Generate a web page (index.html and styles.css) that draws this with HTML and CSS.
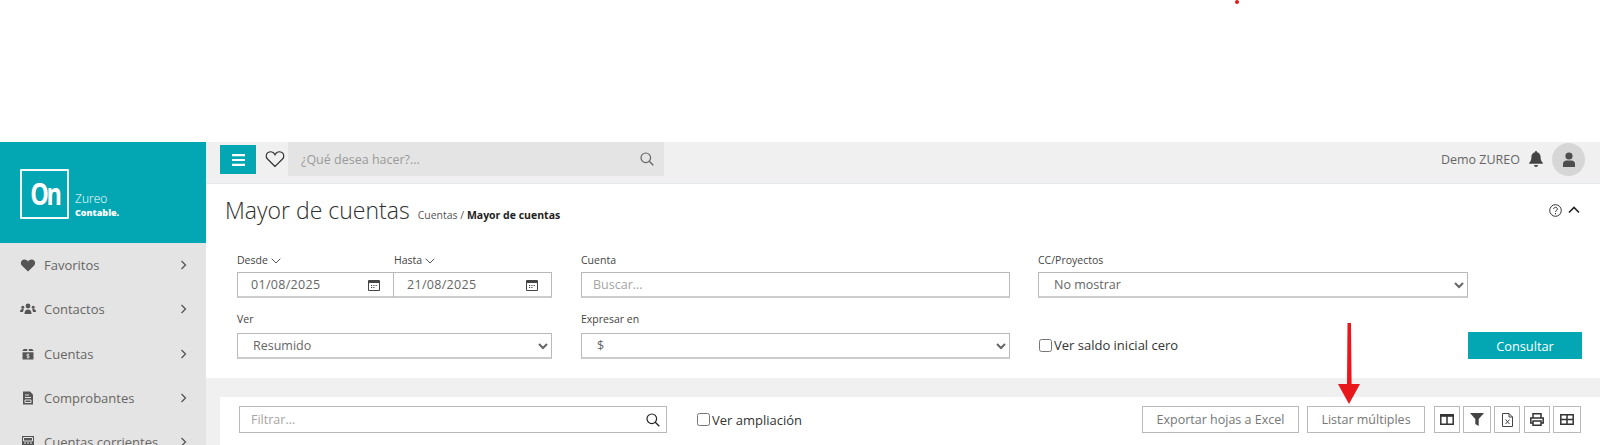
FILE: index.html
```html
<!DOCTYPE html>
<html lang="es">
<head>
<meta charset="utf-8">
<title>Mayor de cuentas</title>
<link rel="stylesheet" href="styles.css">
</head>
<body>
<span class="red-dot"></span>
<svg class="red-arrow" width="24" height="82" viewBox="0 0 24 82"><path d="M10.500 0h3.500l.6 61H23L12 81 1 61h9z" fill="#e8171b"/></svg>
<div class="app">
  <aside class="sidebar">
    <div class="brand">
      <div class="logo-box"><span class="logo-on">On</span></div>
      <div class="logo-text"><span class="logo-zureo">Zureo</span><span class="logo-cont">Contable.</span></div>
    </div>
    <nav class="menu">
      <a class="menu-item"><svg class="mi" viewBox="0 0 16 16"><path d="M8 14.500 1.800 8.400C.2 6.600.7 3.400 3.300 2.700 5 2.200 6.900 2.900 8 4.500c1.100-1.600 3-2.300 4.700-1.800 2.600.7 3.100 3.900 1.500 5.700z" fill="#555"/></svg><span class="mt">Favoritos</span><svg class="chev" viewBox="0 0 8 12"><path d="m1.500 2 4 4-4 4" fill="none" stroke="#555" stroke-width="1.300"/></svg></a>
      <a class="menu-item"><svg class="mi" viewBox="0 0 16 16"><g fill="#555"><circle cx="8" cy="5" r="2.400"/><circle cx="2.800" cy="6.200" r="1.500"/><circle cx="13.200" cy="6.200" r="1.500"/><path d="M4.500 13c0-3 1-4.600 3.500-4.600s3.500 1.600 3.500 4.600zM0 11c0-2 .8-3 2.500-3 .6 0 1 .1 1.400.4C3.300 9.200 3 10 3 11zM16 11c0-2-.8-3-2.500-3-.6 0-1 .1-1.400.4.600.8.900 1.600.900 2.600z"/></g></svg><span class="mt">Contactos</span><svg class="chev" viewBox="0 0 8 12"><path d="m1.500 2 4 4-4 4" fill="none" stroke="#555" stroke-width="1.300"/></svg></a>
      <a class="menu-item"><svg class="mi" viewBox="0 0 16 16"><path d="M2.500 5h4.700V3H5.500C3.800 3 2.500 3.500 2.500 5zM8.800 3v2h4.700c0-1.500-1.300-2-3-2zM2.500 6.200h11v7.300h-11z" fill="#555"/><path d="M8 7.500v4.700M9.300 8.500H7.500a.8.8 0 0 0 0 1.700h1a.8.8 0 0 1 0 1.600H6.700" stroke="#e4e4e4" stroke-width=".8" fill="none"/></svg><span class="mt">Cuentas</span><svg class="chev" viewBox="0 0 8 12"><path d="m1.500 2 4 4-4 4" fill="none" stroke="#555" stroke-width="1.300"/></svg></a>
      <a class="menu-item"><svg class="mi" viewBox="0 0 16 16"><path d="M3 1.500h7l3 3v10H3z" fill="#555"/><path d="M5 5h4M5 7.500h6M5 10h6v2.500H5z" stroke="#e4e4e4" fill="none"/></svg><span class="mt">Comprobantes</span><svg class="chev" viewBox="0 0 8 12"><path d="m1.500 2 4 4-4 4" fill="none" stroke="#555" stroke-width="1.300"/></svg></a>
      <a class="menu-item"><svg class="mi" viewBox="0 0 16 16"><path d="M2 2h12v12H2z" fill="#555"/><path d="M3.500 3.500h9v3.500h-9zM4 9h2M7 9h2M10 9h2M4 11.500h8" stroke="#e4e4e4" fill="none"/></svg><span class="mt">Cuentas corrientes</span><svg class="chev" viewBox="0 0 8 12"><path d="m1.500 2 4 4-4 4" fill="none" stroke="#555" stroke-width="1.300"/></svg></a>
    </nav>
  </aside>
  <main class="main">
    <header class="topbar">
      <button class="burger" type="button" aria-label="Menú"><svg width="13" height="12" viewBox="0 0 13 12"><path d="M0 1.200h13M0 6h13M0 10.800h13" stroke="#fff" stroke-width="2.200"/></svg></button>
      <svg class="fav" width="20" height="18" viewBox="0 0 20 18"><path d="M10 16.500 2.500 9C.4 6.800 1 3.400 3.500 2.300 5.600 1.400 8.600 2 10 4.700c1.400-2.700 4.400-3.300 6.500-2.400C19 3.400 19.600 6.800 17.500 9z" fill="none" stroke="#333" stroke-width="1.200"/></svg>
      <div class="top-search"><span class="top-ph">¿Qué desea hacer?...</span><svg width="14" height="14" viewBox="0 0 14 14"><circle cx="5.800" cy="5.800" r="4.800" fill="none" stroke="#666" stroke-width="1.200"/><path d="m9.300 9.300 4 4" stroke="#666" stroke-width="1.300"/></svg></div>
      <div class="top-user">
        <span class="user-name">Demo ZUREO</span>
        <svg width="14" height="16" viewBox="0 0 14 16"><path d="M7 0a1 1 0 0 1 1 1.200c2.300.5 3.600 2.300 3.600 4.800 0 3 .8 4.300 2.200 5.800v1H.2v-1C1.600 10.300 2.400 9 2.400 6c0-2.500 1.300-4.300 3.600-4.800A1 1 0 0 1 7 0zM5 14h4a2 2 0 0 1-4 0z" fill="#444"/></svg>
        <span class="avatar"><svg width="14" height="15" viewBox="0 0 14 15"><circle cx="7" cy="4" r="3.600" fill="#4d4d4d"/><path d="M1 15v-3c0-2.200 1.500-3.600 3.500-3.600h5c2 0 3.500 1.400 3.500 3.600v3z" fill="#4d4d4d"/></svg></span>
      </div>
    </header>
    <section class="head">
      <div class="title-row">
        <h1 class="title">Mayor de cuentas</h1>
        <span class="crumbs">Cuentas / <b>Mayor de cuentas</b></span>
        <span class="head-tools">
          <svg width="13" height="13" viewBox="0 0 13 13"><circle cx="6.500" cy="6.500" r="5.800" fill="none" stroke="#333" stroke-width="1"/><path d="M4.700 5c0-2.300 3.700-2.300 3.700 0 0 1.400-1.900 1.300-1.900 2.900" fill="none" stroke="#333"/><path d="M6 9h1v1.200H6z" fill="#333"/></svg>
          <svg width="12" height="8" viewBox="0 0 12 8"><path d="m1 6.500 5-5 5 5" fill="none" stroke="#222" stroke-width="1.600"/></svg>
        </span>
      </div>
      <div class="f-row f-row-first">
        <div class="f-col c1 date-pair">
          <div class="date-field">
            <span class="lbl">Desde <svg width="10" height="6" viewBox="0 0 10 6"><path d="m.7.7 4.300 4.300L9.300.7" fill="none" stroke="#555"/></svg></span>
            <div class="box date-box"><span class="val">01/08/2025</span><svg class="cal" width="12" height="12" viewBox="0 0 12 12"><path d="M.5 1.500h11v10H.5z" fill="none" stroke="#444"/><path d="M.5 2h11v2H.5zM3 6h1.200v1H3zM5.300 6h1.200v1H5.300zM7.600 6h1.200v1H7.600zM3 8h1.200v1H3zM5.300 8h1.200v1H5.300z" fill="#444"/></svg></div>
          </div>
          <div class="date-field">
            <span class="lbl">Hasta <svg width="10" height="6" viewBox="0 0 10 6"><path d="m.7.7 4.300 4.300L9.300.7" fill="none" stroke="#555"/></svg></span>
            <div class="box date-box date-box-r"><span class="val">21/08/2025</span><svg class="cal" width="12" height="12" viewBox="0 0 12 12"><path d="M.5 1.500h11v10H.5z" fill="none" stroke="#444"/><path d="M.5 2h11v2H.5zM3 6h1.200v1H3zM5.300 6h1.200v1H5.300zM7.600 6h1.200v1H7.600zM3 8h1.200v1H3zM5.300 8h1.200v1H5.300z" fill="#444"/></svg></div>
          </div>
        </div>
        <div class="f-col c2"><span class="lbl">Cuenta</span><input class="box inp" placeholder="Buscar..."></div>
        <div class="f-col c3"><span class="lbl">CC/Proyectos</span><select class="box sel"><option>No mostrar</option></select></div>
      </div>
      <div class="f-row f-row-second">
        <div class="f-col c1"><span class="lbl">Ver</span><select class="box sel"><option>Resumido</option></select></div>
        <div class="f-col c2"><span class="lbl">Expresar en</span><select class="box sel"><option>$</option></select></div>
        <label class="f-col c3 chk"><input type="checkbox" class="cb"><span>Ver saldo inicial cero</span></label>
        <button class="consult" type="button">Consultar</button>
      </div>
    </section>
    <section class="panel">
      <div class="toolbar">
        <div class="filter"><input class="filter-inp" placeholder="Filtrar..."><svg width="14" height="14" viewBox="0 0 14 14"><circle cx="5.800" cy="5.800" r="4.800" fill="none" stroke="#222" stroke-width="1.200"/><path d="m9.300 9.300 4 4" stroke="#222" stroke-width="1.300"/></svg></div>
        <label class="chk chk-amp"><input type="checkbox" class="cb"><span>Ver ampliación</span></label>
        <div class="actions">
          <button class="btn b-exp" type="button">Exportar hojas a Excel</button>
          <button class="btn b-list" type="button">Listar múltiples</button>
          <button class="ic" type="button" aria-label="Columnas"><svg width="14" height="11" viewBox="0 0 14 11"><path d="M.8.8h12.400v9.400H.8zM7 .8v9.400" fill="none" stroke="#333" stroke-width="1.500"/><path d="M.8.800h12.400v2H.8z" fill="#333"/></svg></button>
          <button class="ic ic-w" type="button" aria-label="Filtro"><svg width="14" height="13" viewBox="0 0 14 13"><path d="M0 0h14L8.700 6v7L5.300 11V6z" fill="#444"/></svg></button>
          <button class="ic" type="button" aria-label="Excel"><svg width="11" height="14" viewBox="0 0 11 14"><path d="M.5.500h6.500l3.500 3.500v9.500H.5zM7 .5V4h3.500" fill="none" stroke="#444"/><path d="m3.500 6.500 4 4.500M7.500 6.500l-4 4.500" stroke="#444" stroke-width="1"/></svg></button>
          <button class="ic ic-p" type="button" aria-label="Imprimir"><svg width="14" height="13" viewBox="0 0 14 13"><path d="M3 5V.8h8V5M3 10H.8V5h12.400v5H11M3 8h8v4.200H3z" fill="none" stroke="#333" stroke-width="1.500"/></svg></button>
          <button class="ic ic-w" type="button" aria-label="Tabla"><svg width="14" height="11" viewBox="0 0 14 11"><path d="M.8.800h12.400v9.400H.8zM7 .8v9.400M.8 5.500h12.400" fill="none" stroke="#333" stroke-width="1.500"/></svg></button>
        </div>
      </div>
    </section>
  </main>
</div>
</body>
</html>
```
FILE: styles.css
```css
* { box-sizing: border-box; }
html, body { margin: 0; height: 445px; overflow: hidden; background: #fff; }
body { font-family: "Open Sans", "Liberation Sans", sans-serif; color: #555; position: relative; }
.red-dot { position: absolute; left: 1235px; top: 0; width: 4px; height: 4px; border-radius: 50%; background: #e8171b; }
.red-arrow { position: absolute; left: 1337px; top: 323px; z-index: 5; }
.app { display: flex; margin-top: 142px; height: 303px; }
.sidebar { width: 206px; flex: none; background: #e4e4e4; overflow: hidden; }
.brand { height: 101px; background: #02a7b3; display: flex; align-items: flex-start; padding: 27px 0 0 20px; color: #fff; }
.logo-box { width: 49px; height: 50px; border: 2px solid #f2fbfb; border-radius: 1px; display: flex; align-items: center; justify-content: center; overflow: hidden; }
.logo-on { font-size: 30px; font-weight: 700; letter-spacing: -3px; line-height: 1; transform: scaleX(.78); }
.logo-text { display: flex; flex-direction: column; margin: 23px 0 0 6px; line-height: 14px; }
.logo-zureo { font-size: 12px; font-weight: 300; }
.logo-cont { font-size: 9px; font-weight: 800; line-height: 13px; }
.menu { display: flex; flex-direction: column; }
.menu-item { height: 44.300px; flex: none; display: flex; align-items: center; padding-left: 20px; font-size: 13px; color: #666; }
.mi { width: 16px; height: 16px; flex: none; }
.mt { margin-left: 8px; flex: 1; }
.chev { width: 8px; height: 12px; margin-right: 18px; }
.main { flex: 1; min-width: 0; background: #f0f0f0; display: flex; flex-direction: column; }
.topbar { height: 42px; flex: none; display: flex; align-items: flex-start; padding-left: 14px; border-bottom: 1px solid #e5e8ec; }
.burger { width: 36px; height: 29px; margin-top: 3px; border: 0; padding: 0; background: #02a7b3; display: flex; align-items: center; justify-content: center; }
.fav { margin: 8px 0 0 9px; }
.top-search { width: 376px; height: 34px; margin-left: 3px; background: #e4e4e4; display: flex; align-items: center; justify-content: space-between; padding: 0 10px 0 13px; }
.top-ph { font-size: 12.500px; color: #9a9a9a; }
.top-user { margin-left: auto; display: flex; align-items: center; height: 34px; padding-right: 15px; }
.user-name { font-size: 12.500px; color: #666; margin-right: 9px; }
.avatar { width: 33px; height: 33px; margin-left: 9px; border-radius: 50%; background: #d6d6d6; display: flex; align-items: center; justify-content: center; }
.head { background: #fff; height: 194px; flex: none; padding: 0 18px 0 31px; }
.title-row { display: flex; align-items: baseline; height: 48px; margin-left: -12px; padding-top: 5px; }
.title { margin: 0; font-size: 23px; font-weight: 300; color: #2e2e2e; line-height: 43px; }
.crumbs { margin-left: 8px; font-size: 10.500px; color: #555; }
.crumbs b { color: #222; font-weight: 700; }
.head-tools { margin-left: auto; display: flex; align-items: center; gap: 6px; align-self: center; margin: -1px 2px 0 auto; }
.f-row { display: flex; }
.f-row-first { margin-top: 21px; height: 45px; }
.f-row-second { margin-top: 14px; }
.f-col { display: flex; flex-direction: column; }
.c1 { width: 315px; margin-right: 29px; }
.c2 { width: 429px; margin-right: 28px; }
.c3 { width: 430px; }
.date-pair { flex-direction: row; }
.date-field { display: flex; flex-direction: column; width: 157px; }
.date-field + .date-field { width: 158px; }
.lbl { font-size: 10.500px; font-weight: 500; color: #444; height: 19px; line-height: 14px; display: block; }
.f-row-second .lbl { height: 21px; }
.box { height: 26px; flex: none; border: 1px solid #b9b9b9; background: #fff; font-family: inherit; font-size: 12.500px; color: #666; margin-top: 0; border-bottom-width: 2px; border-bottom-color: #ccc; }
.date-box { display: flex; align-items: center; justify-content: space-between; padding: 0 13px 0 13px; }
.date-box-r { border-left: 0; padding-left: 13px; }
.val { letter-spacing: .3px; }
.inp { width: 100%; padding: 0 11px; outline: 0; }
.inp::placeholder { color: #a5a5a5; }
.sel { width: 100%; padding: 0 0 0 11px; border-radius: 0; }
.chk { flex-direction: row; display: flex; align-items: center; font-size: 13px; font-weight: 500; color: #333; }
.cb { width: 13px; height: 13px; margin: 0 2px 0 1px; }
.f-row-second .chk { padding-top: 19px; }
.consult { width: 114px; height: 27px; margin-top: 20px; border: 0; background: #02a7b3; color: #fff; font-family: inherit; font-size: 12.800px; padding: 0; }
.panel { margin: 19px 0 0 14px; background: #fff; flex: 1; min-height: 0; }
.toolbar { display: flex; align-items: center; height: 27px; margin-top: 9px; padding-left: 19px; padding-right: 19px; }
.filter { width: 428px; height: 27px; border: 1px solid #b9b9b9; display: flex; align-items: center; padding-right: 6px; }
.filter-inp { flex: 1; min-width: 0; height: 100%; border: 0; outline: 0; padding: 0 11px; font-family: inherit; font-size: 12.500px; color: #666; }
.filter-inp::placeholder { color: #a5a5a5; }
.chk-amp { margin-left: 29px; }
.actions { margin-left: auto; display: flex; gap: 3px; }
.btn, .ic { height: 27px; border: 1px solid #b9b9b9; background: #fff; font-family: inherit; color: #777; padding: 0; display: flex; align-items: center; justify-content: center; }
.btn { font-size: 12.500px; }
.b-exp { width: 157px; margin-right: 5px; }
.b-list { width: 118px; margin-right: 6px; }
.ic { width: 26px; }
.ic-w { width: 28px; }
.ic-p { margin-left: 1px; }
```
